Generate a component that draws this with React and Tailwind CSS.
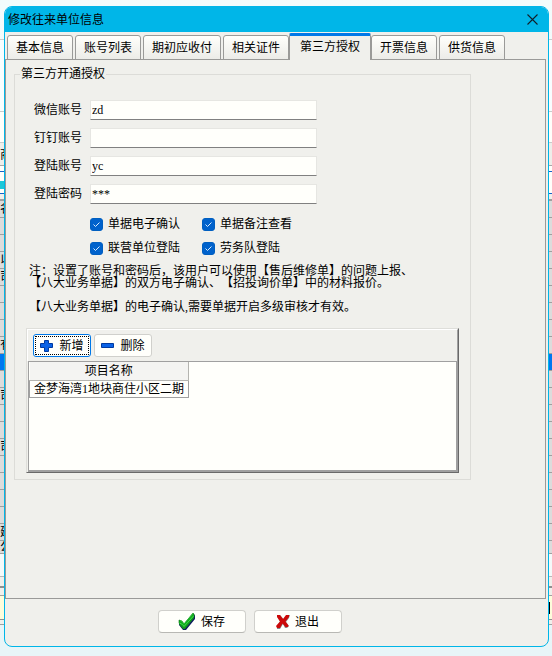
import React, { useState } from 'react';

const tabs = ['基本信息', '账号列表', '期初应收付', '相关证件', '第三方授权', '开票信息', '供货信息'];

const accountFields = [
  { id: 'wechat', label: '微信账号', value: 'zd' },
  { id: 'dingtalk', label: '钉钉账号', value: '' },
  { id: 'login', label: '登陆账号', value: 'yc' },
  { id: 'password', label: '登陆密码', value: '***' },
];

const permissions = ['单据电子确认', '单据备注查看', '联营单位登陆', '劳务队登陆'];

// first column of the grid in the window behind the dialog
const gridRows = ['名', '', '', '以', '司', '', '', '', '有', 'selected', '', '司', '', '', '司', '', '', '', '', '建'];

const PlusIcon = () => (
  <svg className="w-[13px] h-[13px] shrink-0" viewBox="0 0 13 13" aria-hidden="true">
    <path d="M4.5 1.5h4v3h4v4h-4v4h-4v-4h-4v-4h4z" fill="#0a62e6" stroke="#003aa0" />
  </svg>
);

const MinusIcon = () => (
  <svg className="w-[13px] h-[13px] shrink-0" viewBox="0 0 13 13" aria-hidden="true">
    <path d="M0.5 4.5h12v4h-12z" fill="#0a62e6" stroke="#003aa0" />
  </svg>
);

const SaveIcon = () => (
  <svg className="w-[18px] h-[20px] shrink-0" viewBox="0 0 18 20" aria-hidden="true">
    <path d="M1 9l3 1 2 2L15 2l2 1v4L8 18H5L1 13z" fill="#101a60" />
    <path d="M1 8l3 1 2 3L15 1l1 1v3L7 16H5L1 11z" fill="#12a81e" stroke="#087014" strokeWidth="0.6" />
    <path d="M1 11l3 1 2 3L16 4v2L7 17H5L1 12z" fill="#12941e" />
    <path d="M1.5 11l3 1.5L6 14.5 16 3.5" fill="none" stroke="#3be04a" />
    <path d="M2 8.5l2 1L6 12 15 1.500" fill="none" stroke="#2ccc3a" strokeWidth="0.8" />
  </svg>
);

const ExitIcon = () => (
  <svg className="w-[14px] h-[15px] shrink-0" viewBox="0 0 14 15" aria-hidden="true">
    <path d="M1 2l3-1 3.500 4L11 1h3l-1 3-3 4 3 4-2 2H9L7 10l-3 5H1v-3l3-4.500z" fill="#8a8a8a" />
    <path d="M1 1h3l3 4L10 1l3 0v2L9.500 7.500l3 4L12 13H9.500L6.500 9.500 4 14H1l-1-2L4 7.500 1 3z" fill="#cc0808" />
  </svg>
);

const Backdrop = () => (
  <div
    className="[grid-area:1/1] overflow-hidden bg-gradient-to-b from-[#f2fcfc] to-[#e8f5f8] text-xs leading-4 text-black"
    aria-hidden="true"
  >
    <div className="h-10 border-b border-[#c8cccc]" />
    <div className="h-[72px] bg-[#f8feff] border-b border-[#c8cccc]" />
    <div className="h-[31px] bg-[#fffffb] border-b border-[#c8cccc]" />
    <div className="h-[23px] bg-[#eeeeea] border-b border-[#a8a8a8] pt-1">商</div>
    <div className="h-[5px] bg-[#fffffb]" />
    <div className="h-[23px] bg-[#fffffb] border-y border-[#1464c8] flex items-end">
      <span className="w-1 h-2 mb-1 bg-[#1cc8d8]" />
    </div>
    <div className="h-[7px] bg-[#f0f0ec] border-b-2 border-[#a0a0a0]" />
    {gridRows.map((text, i) => (
      <div
        key={i}
        className={`h-[17px] border-b border-[#a0a0a0] ${text === 'selected' ? 'bg-[#0078f0]' : 'bg-[#dcdcdc]'}`}
      >
        {text === 'selected' ? '' : text}
      </div>
    ))}
    <div className="h-[13px] leading-3 bg-[#dcdcdc] border-b border-[#a0a0a0]">公</div>
    <div className="h-[23px] bg-[#f4fafa] border-b border-[#b8b8b8]" />
    <div className="h-[11px] bg-[#f0f0ec] border-b-2 border-[#909090]" />
    <div className="h-[8px] bg-[#f0f0ec] border-b border-[#a0a0a0]" />
    <div className="h-[24px] bg-[#fdfddc] border-b border-[#909090] flex items-center justify-end">
      <span className="w-[3px] h-3 border-l border-black" />
    </div>
    <div className="h-[5px] bg-[#f0f0ec] border-b border-[#a0a0a0]" />
  </div>
);

const ToolButton = ({ focused, icon, children }) => (
  <button
    type="button"
    className={`h-[23px] w-[58px] rounded-[3px] border bg-[#fffffb] p-px ${focused ? 'border-[#0078e8]' : 'border-[#d0d0cc]'}`}
  >
    <span
      className={`h-full flex items-center justify-center gap-[6px] border border-dotted ${focused ? 'border-black' : 'border-transparent'}`}
    >
      {icon}
      <span>{children}</span>
    </span>
  </button>
);

const FooterButton = ({ icon, children }) => (
  <button
    type="button"
    className="h-[23px] w-[88px] rounded-[4px] border border-[#d0d0cc] border-b-[#b8b8b4] bg-[#fffffb] flex items-center justify-center gap-[5px]"
  >
    {icon}
    <span>{children}</span>
  </button>
);

const ProjectPanel = () => (
  <div className="ml-[11px] mr-[11px] mt-[15px] border border-t-[#dededa] border-l-[#dededa] border-r-[#696969] border-b-[#696969]">
    <div className="border-t border-l border-white border-r border-r-[#a0a0a0]">
      <div className="h-[31px] flex items-center gap-[3px] pl-[5px]">
        <ToolButton focused icon={<PlusIcon />}>新增</ToolButton>
        <ToolButton icon={<MinusIcon />}>删除</ToolButton>
      </div>
    </div>
    <div className="ml-px h-[111px] border-t border-l border-r-2 border-b-2 border-[#a0a0a0] bg-[#fffffb]">
      <table className="w-[160px] border-collapse text-center">
        <thead>
          <tr className="h-[18px]">
            <th className="p-0 font-normal bg-[#f4f4f2] border-r border-b border-[#b4b4b0]">项目名称</th>
          </tr>
        </thead>
        <tbody>
          <tr className="h-[17px]">
            <td className="p-0 border border-t-0 border-[#a0a0a0]">金梦海湾1地块商住小区二期</td>
          </tr>
        </tbody>
      </table>
    </div>
  </div>
);

const AuthorizationForm = () => {
  const [values, setValues] = useState(accountFields.map((f) => f.value));
  const [checked, setChecked] = useState(permissions.map(() => true));

  return (
    <fieldset className="ml-2 mr-[74px] min-w-0 border border-[#dcdcd8] pb-[6px]">
      <legend className="ml-[5px] px-px">第三方开通授权</legend>

      <div className="flex flex-col gap-2 pt-[18px] pl-[19px]">
        {accountFields.map((field, i) => (
          <div key={field.id} className="flex items-center gap-2">
            <label htmlFor={field.id} className="w-12 shrink-0 whitespace-nowrap">{field.label}</label>
            <input
              id={field.id}
              type="text"
              value={values[i]}
              onChange={(e) => setValues(values.map((v, n) => (n === i ? e.target.value : v)))}
              className="h-5 w-[52%] bg-[#fffffb] border border-[#e6e6e2] border-b-[#808080] px-px outline-none"
            />
          </div>
        ))}
      </div>

      <div className="mt-3 ml-[75px] grid grid-cols-[112px_112px] gap-y-2">
        {permissions.map((name, i) => (
          <label key={name} className="flex h-4 items-center gap-[5px] whitespace-nowrap">
            <span className="grid">
              <input
                type="checkbox"
                checked={checked[i]}
                onChange={() => setChecked(checked.map((c, n) => (n === i ? !c : c)))}
                className="[grid-area:1/1] appearance-none w-[13px] h-[13px] rounded-[3px] border border-[#808080] checked:border-[#005fc0] checked:bg-[#0062cc]"
              />
              {checked[i] && (
                <svg className="[grid-area:1/1] w-[13px] h-[13px] pointer-events-none" viewBox="0 0 13 13" aria-hidden="true">
                  <path d="M3.500 6.500l2 2 4-4" fill="none" stroke="#d8ecff" />
                </svg>
              )}
            </span>
            {name}
          </label>
        ))}
      </div>

      <div className="mt-[9px] ml-[14px] leading-3 whitespace-nowrap [text-spacing-trim:space-all]">
        <p>注：设置了账号和密码后，该用户可以使用【售后维修单】的问题上报、</p>
        <p>【八大业务单据】的双方电子确认、【招投询价单】中的材料报价。</p>
        <p className="mt-3">【八大业务单据】的电子确认,需要单据开启多级审核才有效。</p>
      </div>

      <ProjectPanel />
    </fieldset>
  );
};

const App = () => {
  const [active, setActive] = useState(4);

  return (
    <div className="grid min-h-screen font-['Liberation_Serif','Noto_Sans_CJK_SC',serif] text-xs leading-4 text-black">
      <Backdrop />
      <div className="[grid-area:1/1] z-10 flex flex-col mt-[6px] mb-[9px] ml-1 mr-[3px] rounded-lg border border-[#00b6e8] bg-[#f0f0ec] overflow-hidden">
        <header className="h-[25px] flex items-center justify-between bg-[#00b6e8] pl-[3px] pr-[10px]">
          <h1>修改往来单位信息</h1>
          <button type="button" aria-label="关闭">
            <svg className="w-[11px] h-[11px]" viewBox="0 0 11 11" aria-hidden="true">
              <path d="M0.500 0.500l10 10M10.500 0.500l-10 10" stroke="#10202a" strokeWidth="1.100" />
            </svg>
          </button>
        </header>

        <div className="h-[28px] flex items-end gap-[2px] pl-[2px]" role="tablist">
          {tabs.map((tab, i) => (
            <button
              key={tab}
              type="button"
              role="tab"
              aria-selected={i === active}
              onClick={() => setActive(i)}
              className={
                i === active
                  ? 'relative h-[27px] -mx-[2px] px-[10px] pb-[2px] border-x border-x-[#9a9a98] border-t-[3px] border-t-[#0078e8] rounded-t-[2px] bg-[#f0f0ec] whitespace-nowrap'
                  : 'h-[25px] px-2 border border-[#9a9a98] rounded-t-[3px] bg-gradient-to-b from-[#fffffb] to-[#ecece8] whitespace-nowrap'
              }
            >
              {tab}
            </button>
          ))}
        </div>

        <main className="-mt-px mr-[2px] flex-1 border border-[#9a9a98] pt-[6px]">
          <AuthorizationForm />
        </main>

        <footer className="flex justify-center gap-2 pt-[11px] pb-[13px] pr-[54px]">
          <FooterButton icon={<SaveIcon />}>保存</FooterButton>
          <FooterButton icon={<ExitIcon />}>退出</FooterButton>
        </footer>
      </div>
    </div>
  );
};

export default App;
